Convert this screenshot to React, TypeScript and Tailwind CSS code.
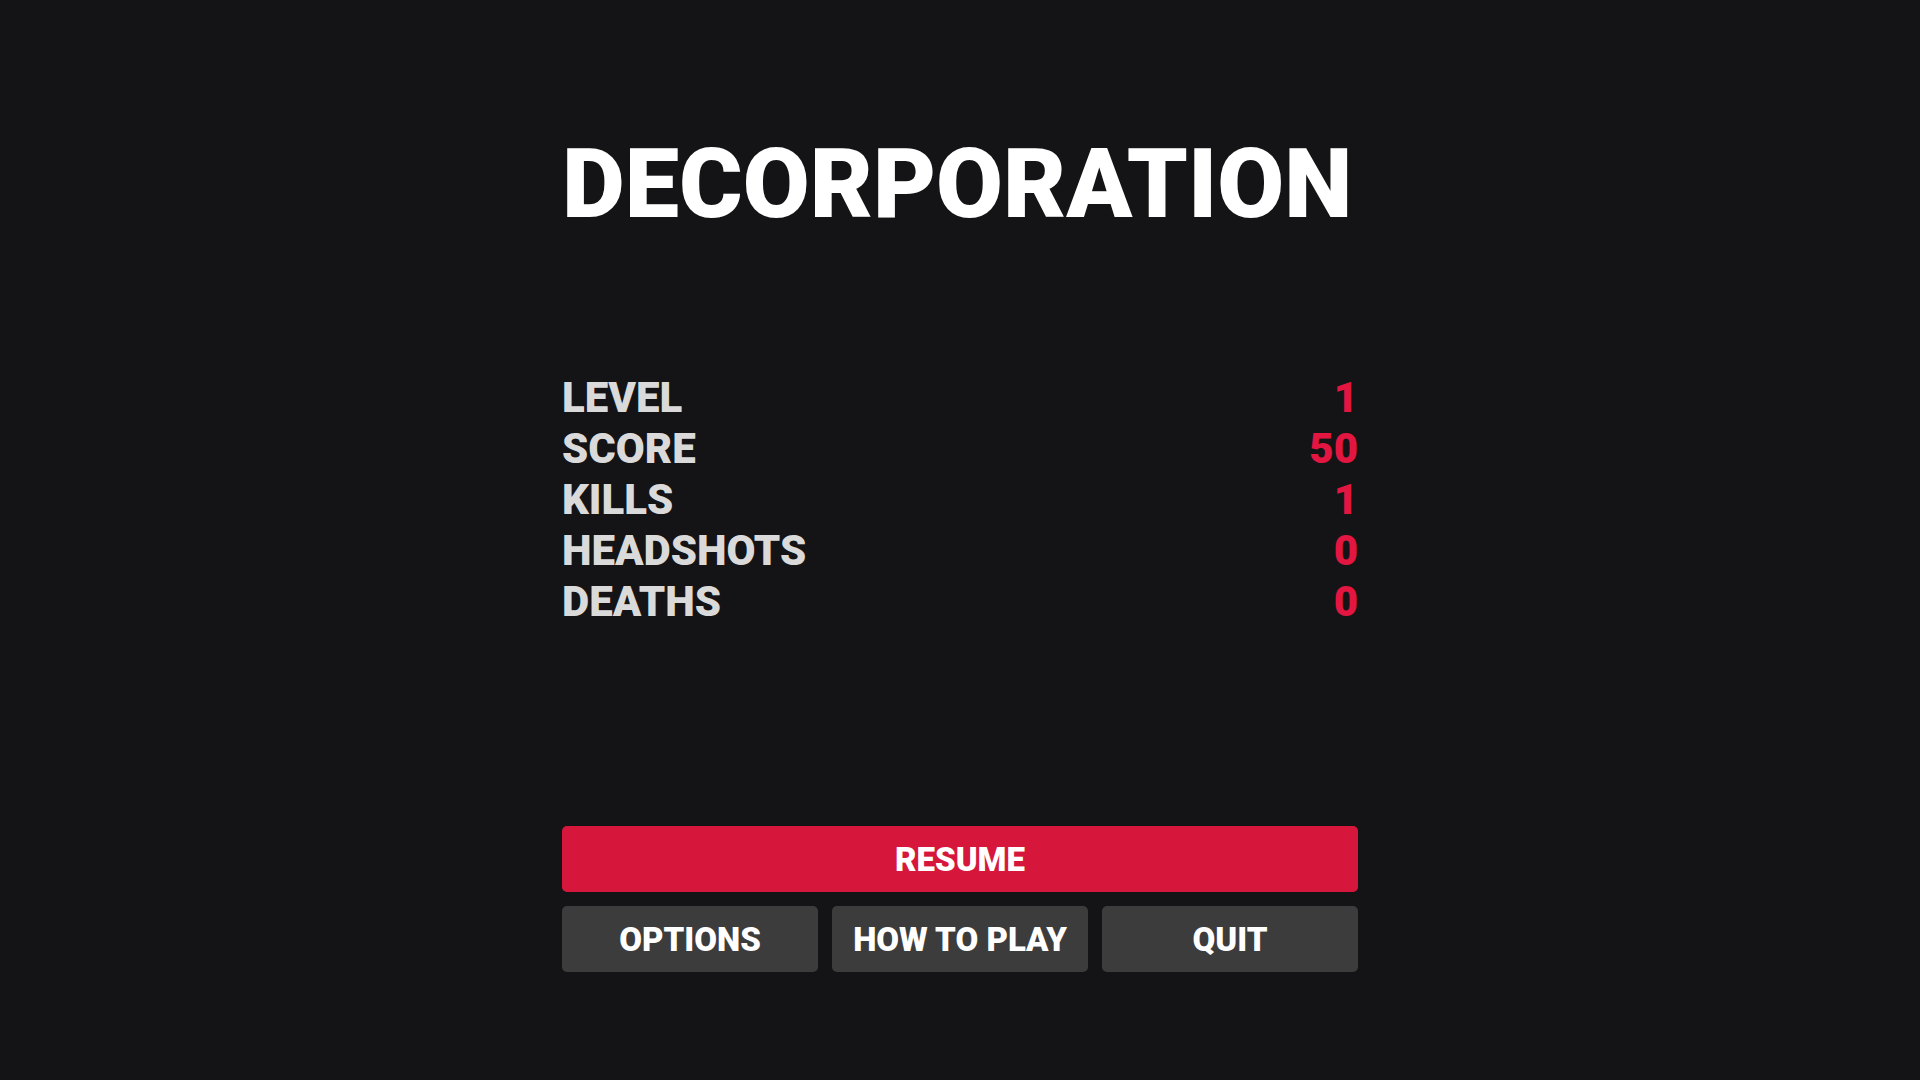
type Stat = {
  label: string;
  value: number;
};

const stats: Stat[] = [
  { label: 'LEVEL', value: 1 },
  { label: 'SCORE', value: 50 },
  { label: 'KILLS', value: 1 },
  { label: 'HEADSHOTS', value: 0 },
  { label: 'DEATHS', value: 0 },
];

const menu = ['OPTIONS', 'HOW TO PLAY', 'QUIT'];

export default function App() {
  return (
    <main className="flex min-h-screen justify-center bg-[#141416] px-6 pt-[136px] pb-[108px] font-['Roboto',sans-serif] font-black text-white">
      <div className="flex w-full max-w-[796px] flex-col">
        <h1 className="text-[97px] leading-[96px]">DECORPORATION</h1>

        <dl className="mt-35 text-[42px] leading-[51px]">
          {stats.map((s) => (
            <div key={s.label} className="flex justify-between">
              <dt className="text-[#dadada]">{s.label}</dt>
              <dd className="text-[#e21640]">{s.value}</dd>
            </div>
          ))}
        </dl>

        <div className="mt-auto grid grid-cols-3 gap-3.5 text-[33px] leading-none">
          <button type="button" className="col-span-3 h-[66px] rounded-[5px] bg-[#d6173b]">
            RESUME
          </button>
          {menu.map((label) => (
            <button key={label} type="button" className="h-[66px] rounded-[5px] bg-[#3c3c3c]">
              {label}
            </button>
          ))}
        </div>
      </div>
    </main>
  );
}
